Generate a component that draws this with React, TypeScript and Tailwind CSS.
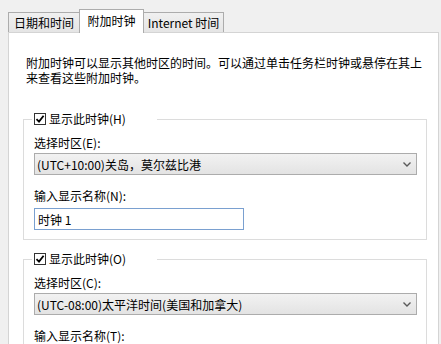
import React from "react";

const font = { fontFamily: '"Noto Sans CJK SC", "Noto Sans", sans-serif' };

function Check() {
  return (
    <span className="flex h-[12px] w-[12px] items-center justify-center border border-[#333333] bg-white">
      <svg width="10" height="10" viewBox="0 0 10 10">
        <path d="M1.5 5.2 L4 7.6 L8.6 1.8" fill="none" stroke="#000" strokeWidth="1.8" />
      </svg>
    </span>
  );
}

function Chevron() {
  return (
    <svg width="8" height="5" viewBox="0 0 8 5">
      <path d="M0.5 0.5 L4 4 L7.5 0.5" fill="none" stroke="#5a5a5a" strokeWidth="1.4" />
    </svg>
  );
}

function Select({ text }: { text: string }) {
  return (
    <div className="mt-[3px] flex h-[22px] w-full items-center justify-between border border-[#acacac] bg-gradient-to-b from-[#f2f2f2] to-[#e3e3e3] pl-[2px] pr-[5px]">
      <span className="leading-[15px]">{text}</span>
      <Chevron />
    </div>
  );
}

function Group({
  legend,
  zone,
  nameLabel,
  input,
  className,
}: {
  legend: string;
  zone: string;
  nameLabel: string;
  input?: string;
  className: string;
}) {
  return (
    <fieldset className={`border border-[#dcdcdc] pl-[10px] pr-[9px] pb-[9px] ${className}`}>
      <legend className="-ml-[2px] flex h-[16px] w-[125px] items-center gap-[3px] bg-white pl-[2px] leading-[16px]">
        <Check />
        <span>{legend}</span>
      </legend>
      <div className="mt-[8px] leading-[15px]">{zone.split("|")[0]}</div>
      <Select text={zone.split("|")[1]} />
      <div className="mt-[13px] leading-[15px]">{nameLabel}</div>
      {input !== undefined && (
        <div className="mt-[5px] flex h-[22px] w-[210px] items-center border border-[#7aa0d0] bg-white pl-[3px] leading-[15px]">
          {input}
        </div>
      )}
    </fieldset>
  );
}

export default function App() {
  return (
    <div
      className="h-[344px] w-[441px] overflow-hidden bg-[#f0f0f0] pl-[8px] pr-[2px] pt-[9px] text-[12px] text-black"
      style={font}
    >
      <div className="relative z-10 flex h-[23px] items-end">
        <div className="flex h-[20px] w-[71px] items-center justify-center border-l border-t border-[#acacac] bg-gradient-to-b from-[#f0f0f0] to-[#e5e5e5] leading-[15px]">
          日期和时间
        </div>
        <div className="-mb-px flex h-[24px] w-[65px] justify-center border-l border-r border-t border-[#acacac] bg-white pt-[3px] leading-[15px]">
          附加时钟
        </div>
        <div className="flex h-[20px] w-[80px] items-center justify-center border-r border-t border-[#acacac] bg-gradient-to-b from-[#f0f0f0] to-[#e5e5e5] leading-[15px]">
          Internet 时间
        </div>
      </div>
      <div className="h-[400px] border border-[#d4d4d4] bg-white pl-[14px] pr-[11px] pt-[22px]">
        <div className="whitespace-nowrap pl-[3px]">
          <div className="h-[15px] leading-[15px]">
            附加时钟可以显示其他时区的时间。可以通过单击任务栏时钟或悬停在其上
          </div>
          <div className="h-[15px] leading-[15px]">来查看这些附加时钟。</div>
        </div>
        <Group
          className="mt-[26px]"
          legend="显示此时钟(H)"
          zone="选择时区(E):|(UTC+10:00)关岛，莫尔兹比港"
          nameLabel="输入显示名称(N):"
          input="时钟 1"
        />
        <Group
          className="mt-[11px]"
          legend="显示此时钟(O)"
          zone="选择时区(C):|(UTC-08:00)太平洋时间(美国和加拿大)"
          nameLabel="输入显示名称(T):"
          input=""
        />
      </div>
    </div>
  );
}
